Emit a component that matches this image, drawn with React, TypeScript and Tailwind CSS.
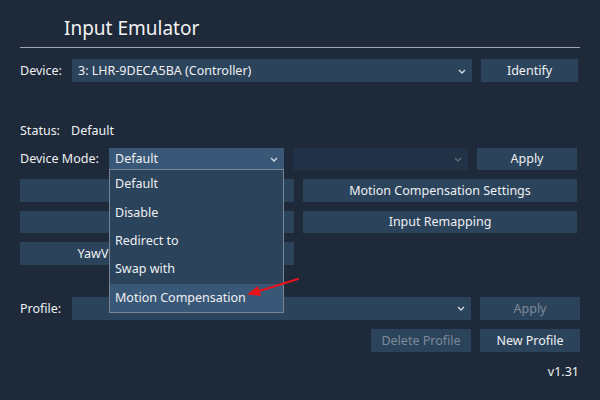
import React from 'react'

const font = { fontFamily: '"Noto Sans", "Open Sans", sans-serif' }

function Chevron({ dim }: { dim?: boolean }) {
    return (
        <svg width="8" height="5" viewBox="0 0 8 5" className="shrink-0">
            <path d="M1 1 L4 4 L7 1" fill="none" stroke={dim ? '#5d6d80' : '#d8dde3'} strokeWidth="1.3" />
        </svg>
    )
}

function Btn({ children, className = '', disabled }: { children?: React.ReactNode; className?: string; disabled?: boolean }) {
    return (
        <div className={`flex items-center justify-center whitespace-nowrap bg-[#2c435c] pt-[1px] ${disabled ? 'text-[#7d8a98]' : 'text-[#eef0f2]'} ${className}`}>
            {children}
        </div>
    )
}

export default function App() {
    const modes = ['Default', 'Disable', 'Redirect to', 'Swap with', 'Motion Compensation']

    return (
        <div className="relative w-[600px] h-[400px] overflow-hidden bg-[#1e2a3a] text-[12.5px] text-[#eef0f2]" style={font}>
            {/* Title */}
            <div className="mx-[20px] pt-[14px] pb-[5px] border-b border-[#a3a8ae]">
                <div className="pl-[44px] text-[19px] leading-[28px] text-[#f2f2f2]">Input Emulator</div>
            </div>

            <div className="px-[20px]">
                {/* Device */}
                <div className="mt-[11px] flex h-[23px] items-center">
                    <div className="w-[52px] pt-[1px]">Device:</div>
                    <div className="flex h-full w-[400px] items-center justify-between bg-[#2c435c] pl-[6px] pr-[6px] pt-[1px]">
                        <span>3: LHR-9DECA5BA (Controller)</span>
                        <Chevron />
                    </div>
                    <Btn className="ml-[9px] h-full w-[97px]">Identify</Btn>
                </div>

                {/* Status */}
                <div className="mt-[37px] flex h-[23px] items-center pt-[1px]">
                    <div className="w-[51px]">Status:</div>
                    <div>Default</div>
                </div>

                {/* Device Mode */}
                <div className="mt-[6px] flex h-[22px] items-center">
                    <div className="w-[89px] pt-[1px]">Device Mode:</div>
                    <div className="flex h-full w-[175px] items-center justify-between bg-[#395777] pl-[6px] pr-[6px] pt-[1px]">
                        <span>Default</span>
                        <Chevron />
                    </div>
                    <div className="ml-[9px] flex h-full w-[175px] items-center justify-end bg-[#223246] pr-[6px]">
                        <Chevron dim />
                    </div>
                    <Btn className="ml-[9px] h-full w-[100px]">Apply</Btn>
                </div>

                {/* Feature buttons */}
                <div className="mt-[9px] grid h-[23px] grid-cols-[274px_274px] gap-x-[9px]">
                    <Btn />
                    <Btn>Motion Compensation Settings</Btn>
                </div>
                <div className="mt-[9px] grid h-[22px] grid-cols-[274px_274px] gap-x-[9px]">
                    <Btn />
                    <Btn>Input Remapping</Btn>
                </div>
                <div className="mt-[9px] grid h-[23px] grid-cols-[274px_274px] gap-x-[9px]">
                    <Btn>YawVR Integration Settings</Btn>
                </div>

                {/* Profile */}
                <div className="mt-[32px] flex h-[23px] items-center">
                    <div className="w-[52px] pt-[1px]">Profile:</div>
                    <div className="flex h-full w-[399px] items-center justify-end bg-[#2c435c] pr-[6px]">
                        <Chevron />
                    </div>
                    <Btn disabled className="ml-[9px] h-full w-[100px]">Apply</Btn>
                </div>
                <div className="mt-[9px] flex h-[23px] justify-end">
                    <Btn disabled className="h-full w-[100px]">Delete Profile</Btn>
                    <Btn className="ml-[9px] h-full w-[100px]">New Profile</Btn>
                </div>

                <div className="mt-[9px] flex h-[22px] items-center justify-end pr-[1px] pt-[1px]">v1.31</div>
            </div>

            {/* Open dropdown list */}
            <div className="absolute left-[109px] top-[169px] w-[175px] border border-[#7b8592] bg-[#2c435c]">
                {modes.map((m, i) => (
                    <div
                        key={m}
                        className={`flex h-[28.4px] items-center pl-[5px] pt-[1px] ${i === modes.length - 1 ? 'bg-[#395777]' : ''}`}
                    >
                        {m}
                    </div>
                ))}
            </div>

            {/* Annotation arrow */}
            <svg className="pointer-events-none absolute left-0 top-0" width="600" height="400">
                <line x1="298" y1="279" x2="256" y2="292" stroke="#e8141c" strokeWidth="2.2" strokeLinecap="round" />
                <path d="M247 294.5 L258 286 L261 296 Z" fill="#e8141c" />
            </svg>
        </div>
    )
}
